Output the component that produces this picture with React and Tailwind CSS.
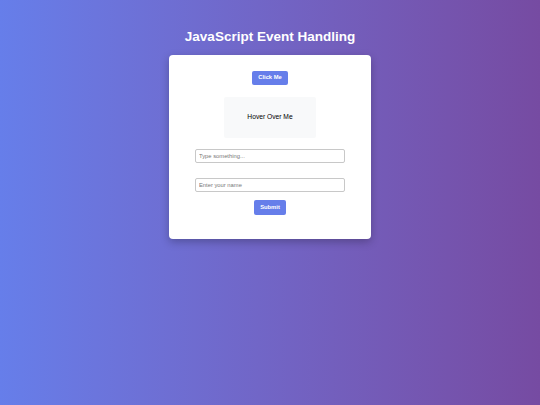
export default function App() {
  return (
    <div
      className="min-h-[405px] w-full flex flex-col items-center bg-gradient-to-r from-[#667eea] to-[#764ba2]"
      style={{ fontFamily: '"Liberation Sans", Arial, sans-serif' }}
    >
      <h1 className="mt-[27px] text-[13.5px] leading-[20px] font-bold text-white">JavaScript Event Handling</h1>
      <div className="mt-[8px] w-[202px] h-[184px] bg-white rounded-[4px] shadow-[0_3px_8px_rgba(0,0,0,0.25)] flex flex-col items-center pt-[16px]">
        <button className="w-[36px] h-[14px] rounded-[2px] bg-[#667eea] text-white text-[5.8px] font-bold leading-none">
          Click Me
        </button>
        <div className="mt-[12px] w-[92px] h-[41px] rounded-[2px] bg-[#f8f9fa] flex items-center justify-center text-[6.7px] text-black">
          Hover Over Me
        </div>
        <input
          className="mt-[11px] w-[150px] h-[14px] rounded-[2px] border border-[#c8c8c8] px-[3px] text-[5.8px] placeholder:text-[#777] outline-none"
          placeholder="Type something..."
        />
        <input
          className="mt-[15px] w-[150px] h-[14px] rounded-[2px] border border-[#c8c8c8] px-[3px] text-[5.8px] placeholder:text-[#777] outline-none"
          placeholder="Enter your name"
        />
        <button className="mt-[8px] w-[32px] h-[15px] rounded-[2px] bg-[#667eea] text-white text-[5.8px] font-bold leading-none">
          Submit
        </button>
      </div>
    </div>
  );
}
